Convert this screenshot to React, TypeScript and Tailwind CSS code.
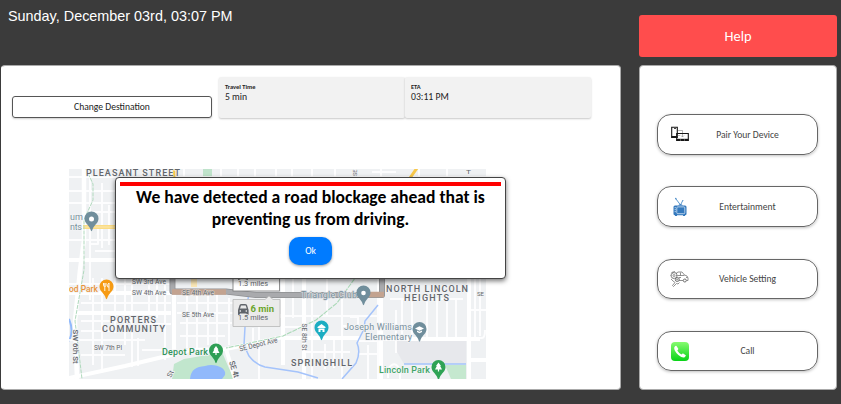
import React from 'react';

const UI = "font-['Carlito','Lato',sans-serif]";

function Label({ x, y, w, size = 7.5, color = '#62666b', weight = 400, rotate, halo = '#f3f4f6', children }: {
  x: number; y: number; w: number; size?: number; color?: string; weight?: number; rotate?: number; halo?: string; children: string;
}) {
  return (
    <text
      x={x} y={y} fontSize={size} fill={color} fontWeight={weight} textLength={w} lengthAdjust={size < 8.5 ? 'spacingAndGlyphs' : 'spacing'}
      stroke={halo} strokeWidth={1.4} paintOrder="stroke" strokeLinejoin="round"
      transform={rotate === undefined ? undefined : `rotate(${rotate} ${x} ${y})`}
    >
      {children}
    </text>
  );
}

function Pin({ x, y, color, children }: { x: number; y: number; color: string; children: React.ReactNode }) {
  return (
    <g transform={`translate(${x} ${y})`}>
      <path d="M0 12.200C-.8 12-.9 10.500-1.600 9C-3 6-7 4-7-.5A7 7 0 0 1 7-.5C7 4 3 6 1.600 9C.9 10.500.8 12 0 12.200Z" fill={color} />
      {children}
    </g>
  );
}

function CityMap() {
  return (
    <svg width="417" height="210" viewBox="69 169 417 210" className="block font-['Roboto',sans-serif]">
      <rect x="69" y="169" width="417" height="210" fill="#eff1f3" />
      <path d="M396 339H466V364H404L396 350Z" fill="#e7e8ec" />
      <path d="M445 365H466V379H451Z" fill="#c5e8cf" />
      <path d="M203 169H212V177H203Z" fill="#bfe3cb" />
      <path d="M174 364L184 359L207 355L222 352L228 366L234 379H172Z" fill="#c1e6cd" />
      <path d="M190 379C191 369 196 367 205 366C215 363 227 368 225 375L222 379Z" fill="#91b9fb" />
      <path d="M69 319Q74 331 69 341" fill="none" stroke="#91b9fb" strokeWidth="2" />
      <g fill="none" stroke="#fff" strokeWidth="2" strokeLinejoin="round" strokeOpacity=".85">
        <path d="M69 191H115M69 203H115M69 240H115M90 169V300M102 183V248M109 205V245M98 229V244H90M92 212H115M95 251H115M69 177H486" />
        <path d="M69 284H171M81 303H171M81 321H133M81 331H115M69 340H145M81 355H125M93 278V365M102 278V370M115 278V333M125 278V345M132 278V367M149 278V312M157 278V318M165 278V360M138 338V366M142 350H171M147 324H171" />
        <path d="M177 303H244M177 313H244M180 323H232M180 336H225M187 292V348M197 292V348M208 292V345M217 292V345M229 298V345" />
        <path d="M253 328V345M259 326V379M293 278V318M312 299V379M327 278V315M342 299V379M260 316H381M285 327H305M305 352H350M325 344V369M334 339V368M350 317H358V326H342M357 341H377M358 354H378M368 345V379M378 279V379" />
        <path d="M390 299H463M402 298V339M412 298V339M427 298V339M437 298V339M447 298V339M456 298V339M396 310V353M384 371H403M388 378V369Q395 359 400 370V379M475 278V339M480 278V336M469 338H482Q485 338 485 330M469 310H486" />
        <path d="M125 170V177M143 169V177M161 169V177M184 169V177M221 169V177M238 169V177M255 169V177M276 169V177M292 169V177M312 169V177M335 169V177M372 172H396M381 169V177M419 169V177M447 169V177" />
      </g>
      <g fill="none" stroke="#fff" strokeWidth="4" strokeLinejoin="round">
        <path d="M84 169V240L80 270L75 321L77 379" strokeWidth="4.5" />
        <path d="M69 260H115M69 293H174M75 313H171M174 278V355M69 378L125 366L171 355L190 350L226 349L283 337" />
        <path d="M283 278V365M283 338H360M304 278V379M381 278V379M283 316H233M381 339H480M469 278V379M469 360H486M226 349L235 379" />
      </g>
      <path d="M83 227H116" stroke="#fbdc83" strokeWidth="4" />
      <path d="M83 227H116" stroke="#fbe29b" strokeWidth="2" />
      <path d="M174 169V178M410 178L417 168" stroke="#f8c84b" strokeWidth="3" />
      <path d="M191 276H197V287H191Z" fill="#fbe7b6" />
      <path d="M86 169L93 184V200L84 220V270L75 321L78 345L82 379" fill="none" stroke="#b0d9bd" strokeWidth="1" strokeDasharray="4 1" />
      <path d="M358 274L337 303L316 320L283 336L226 348" fill="none" stroke="#aad9b7" strokeWidth="1.1" strokeDasharray="5 1" />
      <path d="M249 294L246 309L244 345L249 356Q256 365 265 367L298 372L318 378" fill="none" stroke="#a4c3fb" strokeWidth="1.5" />
      <path d="M378 305L365 321L364 329L357 343Q361 352 356 363L342 379M404 364H466" fill="none" stroke="#a4c3fb" strokeWidth="1.5" />
      <path d="M172.5 276V291.5H226L256 295H363H382V276" fill="none" stroke="#8f9093" strokeWidth="6" strokeLinejoin="round" />
      <path d="M172.5 276V291.5H226L256 295H363H382V276" fill="none" stroke="#a9aaad" strokeWidth="4.4" strokeLinejoin="round" />
      <path d="M172 292H226M363 294.5H384" stroke="#c3a390" strokeWidth="5.6" />

      <Label x={86} y={175.500} w={94} size={9} weight={500}>PLEASANT STREET</Label>
      <Label x={357} y={176} w={6.500} size={6} rotate={-90}>SE</Label>
      <Label x={466} y={173.500} w={5} size={5}>T</Label>
      <Label x={70} y={219.500} w={13} size={9} color="#78909c">um</Label>
      <Label x={70} y={229.500} w={12} size={9} color="#78909c">nts</Label>
      <Label x={132} y={283.5} w={34} size={7}>SW 3rd Ave</Label>
      <Label x={132} y={295} w={34} size={7}>SW 4th Ave</Label>
      <Label x={182} y={294.5} w={32} size={7} halo="#d9d0ca">SE 4th Ave</Label>
      <Label x={182} y={317} w={32} size={7}>SE 5th Ave</Label>
      <Label x={94} y={349.5} w={28} size={7}>SW 7th Pl</Label>
      <Label x={73} y={329.5} w={34} size={7.5} weight={500} rotate={90}>SW 6th St</Label>
      <Label x={302} y={323.5} w={27} size={7.5} rotate={90}>SE 8th St</Label>
      <Label x={240} y={351.5} w={39} size={7.5} rotate={-14}>SE Depot Ave</Label>
      <Label x={229} y={362} w={17} size={8} weight={500} rotate={72}>SE 4t</Label>
      <Label x={171} y={378} w={7} size={7} rotate={-65}>St</Label>
      <Label x={477} y={296} w={7} size={6}>SE</Label>
      <Label x={110} y={323} w={46} size={9} weight={500}>PORTERS</Label>
      <Label x={102} y={332} w={63} size={9} weight={500}>COMMUNITY</Label>
      <Label x={386} y={291.5} w={82} size={9} weight={500}>NORTH LINCOLN</Label>
      <Label x={404} y={300.5} w={45} size={9} weight={500}>HEIGHTS</Label>
      <Label x={291} y={366} w={61} size={9} weight={500}>SPRINGHILL</Label>
      <Label x={69} y={291.5} w={29} size={8.4} weight={500} color="#e8943b">od Park</Label>
      <Label x={162} y={355} w={46} size={9} weight={500} color="#31935a">Depot Park</Label>
      <Label x={379} y={373} w={51} size={9} weight={500} color="#41a568">Lincoln Park</Label>
      <Label x={301} y={298} w={56} size={9} color="#78909c" halo="#d9dbdf">Triangle Club</Label>
      <Label x={344} y={330} w={68} size={9} color="#78909c">Joseph Williams</Label>
      <Label x={365} y={340} w={47} size={9} color="#78909c">Elementary</Label>

      <g>
        <rect x="233" y="268" width="46.5" height="23" fill="#fff" stroke="#777" strokeWidth=".8" />
        <path d="M238 279L243 277L248 279" stroke="#555" strokeWidth="2" fill="none" />
        <Label x={238} y={285.5} w={30} size={7.5} halo="#fff">1.3 miles</Label>
        <path d="M233 299.5H265L269 296L273 299.5H280V326.5H233Z" fill="#ebebeb" stroke="#bdbdbd" strokeWidth=".9" />
        <path d="M238 310L239.600 305Q240 304 241.500 304H245Q246.500 304 247 305L248.600 310V315H246.500V313.500H240V315H238Z" fill="#60646a" />
        <path d="M241 305.500H245.700L246.700 308.500H240Z" fill="#e8e8e8" />
        <circle cx="240.3" cy="311" r=".8" fill="#fff" />
        <circle cx="246.300" cy="311" r=".8" fill="#fff" />
        <Label x={250.5} y={311.500} w={23.5} size={9.5} weight={700} color="#6aa42a" halo="#ebebeb">6 min</Label>
        <Label x={238} y={320} w={30} size={7.5} halo="#ebebeb">1.5 miles</Label>
      </g>

      <Pin x={91.5} y={219} color="#708e9c"><circle r="2.5" fill="#fff" /></Pin>
      <Pin x={363.5} y={293} color="#708e9c"><circle r="2.3" fill="#fff" /></Pin>
      <Pin x={106.5} y={287} color="#f69b14">
        <path d="M-3-4V-1.500Q-3-.5-1.700-.5V4M-1.700-4V-1M-.5-4V-1.500Q-.5-.5-1.700-.5M2.500 4V-4Q.8-3 1.200 0H2.500" stroke="#fff" strokeWidth=".9" fill="none" />
      </Pin>
      <Pin x={321.5} y={328} color="#1badc2">
        <path d="M-4-1L0-4L4-1V0H-4ZM-3 .6H3V4H-3Z" fill="#fff" />
        <path d="M-1 4V2H1V4" fill="#1badc2" />
      </Pin>
      <Pin x={419.5} y={329.5} color="#708e9c">
        <path d="M-4.500-1L0-3.300L4.500-1L0 1.300ZM-2.500 1L0 2.200L2.500 1V2.500L0 3.700L-2.500 2.500Z" fill="#fff" />
      </Pin>
      <Pin x={216} y={351} color="#2f9f55">
        <path d="M0-5L2.500-1.500H1.700L3.500 2H.6V4H-.6V2H-3.500L-1.700-1.500H-2.500Z" fill="#fff" />
      </Pin>
      <Pin x={438.5} y={367.5} color="#2fa355">
        <path d="M0-5L2.500-1.500H1.700L3.500 2H.6V4H-.6V2H-3.500L-1.700-1.500H-2.500Z" fill="#fff" />
      </Pin>
    </svg>
  );
}

function DevicesIcon() {
  return (
    <svg width="18" height="18" viewBox="0 0 18 18" fill="none">
      <path d="M.7 2.200H6.300V12.500H.7Z" stroke="#161616" strokeWidth="1.1" />
      <path d="M.5 11H6V13H.5Z" fill="#161616" />
      <path d="M3 3.500H5" stroke="#161616" strokeWidth=".8" />
      <path d="M7 5.500H11.500V12M6.500 10.500H9M11.500 12L10 10.500M11.500 12L13 10.500" stroke="#888" strokeWidth=".6" />
      <path d="M5.700 8.500H17.300V15.500H5.700Z" stroke="#161616" strokeWidth="1.1" />
      <path d="M5.500 13.800H17.500V16H5.500Z" fill="#161616" />
      <path d="M9 15H9.800M13 15H13.800" stroke="#fff" strokeWidth=".7" />
    </svg>
  );
}

function TvIcon() {
  return (
    <svg width="18" height="20" viewBox="0 0 18 20" fill="none">
      <path d="M5 2L9.500 8L11.500 4" stroke="#4a8cc9" strokeWidth=".9" />
      <circle cx="4.800" cy="1.600" r=".8" fill="#4a8cc9" />
      <circle cx="11.800" cy="3.600" r=".7" fill="#4a8cc9" />
      <path d="M7 8.600Q9.500 5.800 12 8.600Z" fill="#3479bd" />
      <rect x="2.500" y="8.500" width="13" height="9.700" rx="1.500" fill="#3479bd" />
      <rect x="5.800" y="9.900" width="8" height="6.800" rx="1" stroke="#d4e5f5" strokeWidth=".8" />
      <path d="M4.200 10V16" stroke="#c2daef" strokeWidth="1" strokeDasharray="1.200 .8" />
      <path d="M4 18H6V19H4ZM12 18H14V19H12Z" fill="#3479bd" />
    </svg>
  );
}

function VehicleIcon() {
  return (
    <svg width="19" height="18" viewBox="0 0 19 18" fill="none" stroke="#6e6e6e" strokeWidth=".75">
      <path d="M6 3.500L8 2H12L14.500 5L17 6L18 8V10.500H16.500M13 10.500H9M7.500 5.500H14.500M10.500 2.500V5.500M9 7.500H11M16 7.500H17.500" />
      <circle cx="4" cy="5.500" r="2.900" strokeDasharray="1 .4" strokeWidth="1.300" />
      <circle cx="4" cy="5.500" r="1" />
      <circle cx="7.300" cy="9.500" r="2" strokeWidth="1" />
      <circle cx="7.300" cy="9.500" r=".6" />
      <circle cx="14.800" cy="10.500" r="1.500" strokeWidth="1" />
      <path d="M1 9L3 11L5 12.500L2.500 15.500L3.500 16.500L6.500 13.500L8 14L9.500 12.500M1.500 2.500L5 1.500" />
    </svg>
  );
}

function PhoneIcon() {
  return (
    <svg width="18" height="19" viewBox="0 0 18 19">
      <defs>
        <linearGradient id="callFill" x1="0" y1="0" x2="0" y2="1">
          <stop stopColor="#86fb70" />
          <stop offset="1" stopColor="#08d317" />
        </linearGradient>
      </defs>
      <rect width="18" height="19" rx="4" fill="url(#callFill)" />
      <path d="M3.300 5.200Q4.800 3.200 5.500 4L7.300 6.700Q7.600 7.300 6.300 8.500Q7.800 11.200 10.500 12.500Q11.500 11.200 12.200 11.600L14.800 13.300Q15.300 13.900 13.600 15.300Q11.500 16.300 7.400 13Q2.500 8.500 3.300 5.200Z" fill="#fff" />
    </svg>
  );
}

const ACTIONS = [
  { label: 'Pair Your Device', icon: <DevicesIcon /> },
  { label: 'Entertainment', icon: <TvIcon /> },
  { label: 'Vehicle Setting', icon: <VehicleIcon /> },
  { label: 'Call', icon: <PhoneIcon /> },
];

function Stat({ title, value }: { title: string; value: string }) {
  return (
    <div className="h-[41px] w-[186px] rounded-[2px] bg-[#f2f2f2] pl-[6px] pt-[6px] shadow-[0_1px_2px_rgba(0,0,0,0.22)]">
      <div className="text-[6.4px] font-bold leading-[8px] text-[#222]">{title}</div>
      <div className="text-[9.7px] leading-[12px] text-[#222]">{value}</div>
    </div>
  );
}

function BlockageDialog() {
  return (
    <div className="absolute left-[113px] top-[111px] flex h-[102px] w-[391px] flex-col items-center rounded-[4px] border border-[#444] bg-white px-[4px] pt-[4px] shadow-[0_2px_5px_rgba(0,0,0,0.55)]">
      <div className="h-[4px] w-[381px] shrink-0 bg-[#ff0000]" />
      <h1 className="whitespace-nowrap text-center text-[17.6px] font-bold leading-[22px] text-black">
        We have detected a road blockage ahead that is
        <br />
        preventing us from driving.
      </h1>
      <button className="mt-[7px] h-[28px] w-[43px] shrink-0 rounded-[10px] bg-[#007bff] text-[9.6px] text-white shadow-[0_1px_3px_rgba(0,0,0,0.4)]">Ok</button>
    </div>
  );
}

export default function App() {
  return (
    <div className={`flex h-[404px] w-[841px] overflow-hidden bg-[#3b3b3b] pl-px ${UI}`}>
      <div className="flex w-[620px] flex-col">
        <header className="h-[65px] shrink-0 whitespace-nowrap pl-[7px] pt-[6px] font-['Liberation_Sans',sans-serif] text-[14.4px] leading-[20px] text-white">
          Sunday, December 03rd, 03:07 PM
        </header>
        <main className="relative h-[325px] rounded-[4px] border border-[#aaa] border-l-white bg-white">
          <div className="flex h-[103px] pl-[10px] pt-[11px]">
            <button className="mt-[19px] h-[22px] w-[200px] rounded-[3px] border border-[#555] text-[9.6px] leading-[20px] text-[#222] shadow-[0_1px_2px_rgba(0,0,0,0.2)]">
              Change Destination
            </button>
            <div className="ml-[7px] flex">
              <Stat title="Travel Time" value="5 min" />
              <Stat title="ETA" value="03:11 PM" />
            </div>
          </div>
          <div className="pl-[67px]">
            <CityMap />
          </div>
          <BlockageDialog />
        </main>
      </div>
      <aside className="ml-[18px] flex w-[198px] flex-col pt-[15px]">
        <button className="h-[42px] shrink-0 rounded-[3px] bg-[#ff4d4d] pt-px text-[14.4px] text-white">Help</button>
        <nav className="mt-[8px] flex h-[325px] flex-col gap-[31.8px] rounded-[4px] border border-[#aaa] bg-white px-[17px] pt-[48px]">
          {ACTIONS.map((a) => (
            <button key={a.label} className="flex h-[40.5px] w-[161px] shrink-0 items-center rounded-[14px] border border-[#666] shadow-[0_1px_3px_rgba(0,0,0,0.25)]">
              <span className="ml-[12px] flex w-[19px] justify-center">{a.icon}</span>
              <span className="w-[117px] pt-px text-center text-[9.6px] text-[#444]">{a.label}</span>
            </button>
          ))}
        </nav>
      </aside>
    </div>
  );
}
